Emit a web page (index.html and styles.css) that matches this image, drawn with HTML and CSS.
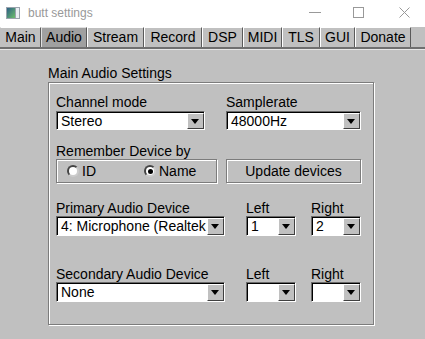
FILE: index.html
```html
<!DOCTYPE html>
<html lang="en">

<head>
  <meta charset="UTF-8">
  <meta name="viewport" content="width=device-width, initial-scale=1.0">
  <title>butt settings</title>
  <link rel="stylesheet" href="styles.css">
</head>

<body>
  <div class="window">
    <div class="titlebar">
      <svg class="app-icon" width="14" height="12" viewBox="0 0 14 12">
        <defs>
          <linearGradient id="ig" x1="0" y1="0" x2="1" y2="1">
            <stop offset="0" stop-color="#2d5f86" />
            <stop offset="1" stop-color="#6cbf6a" />
          </linearGradient>
        </defs>
        <rect x="0" y="0" width="14" height="12" fill="#9aa3ad" />
        <rect x="1" y="1" width="8" height="10" fill="url(#ig)" />
        <rect x="10" y="1" width="3" height="10" fill="#e8eef2" />
      </svg>
      <span class="title">butt settings</span>
      <div class="controls">
        <svg class="ctl ctl-min" width="12" height="12" viewBox="0 0 12 12">
          <line x1="0" y1="6.5" x2="12" y2="6.5" stroke="#999" stroke-width="1" />
        </svg>
        <svg class="ctl ctl-max" width="11" height="11" viewBox="0 0 11 11">
          <rect x="0.5" y="0.5" width="10" height="10" fill="none" stroke="#999" stroke-width="1" />
        </svg>
        <svg class="ctl ctl-close" width="11" height="11" viewBox="0 0 11 11">
          <path d="M0.5 0.5 L10.5 10.5 M10.5 0.5 L0.5 10.5" stroke="#999" stroke-width="1" />
        </svg>
      </div>
    </div>

    <div class="tabs">
      <div class="tab tab-main">Main</div>
      <div class="tab tab-audio active">Audio</div>
      <div class="tab tab-stream">Stream</div>
      <div class="tab tab-record">Record</div>
      <div class="tab tab-dsp">DSP</div>
      <div class="tab tab-midi">MIDI</div>
      <div class="tab tab-tls">TLS</div>
      <div class="tab tab-gui">GUI</div>
      <div class="tab tab-donate">Donate</div>
    </div>

    <div class="panel">
      <div class="group-label">Main Audio Settings</div>
      <div class="group">

        <div class="row row-1">
          <div class="field">
            <div class="label">Channel mode</div>
            <div class="combo combo-channel"><span class="value">Stereo</span><span class="arrow"></span></div>
          </div>
          <div class="field field-rate">
            <div class="label">Samplerate</div>
            <div class="combo combo-rate"><span class="value">48000Hz</span><span class="arrow"></span></div>
          </div>
        </div>

        <div class="row row-2">
          <div class="field">
            <div class="label">Remember Device by</div>
            <div class="radio-box">
              <span class="radio"></span><span class="radio-text">ID</span>
              <span class="radio radio-name checked"></span><span class="radio-text">Name</span>
            </div>
          </div>
          <div class="btn">Update devices</div>
        </div>

        <div class="row row-3">
          <div class="field">
            <div class="label">Primary Audio Device</div>
            <div class="combo combo-device"><span class="value">4: Microphone (Realtek High Definition Audio)</span><span class="arrow"></span></div>
          </div>
          <div class="field field-left">
            <div class="label">Left</div>
            <div class="combo combo-ch"><span class="value">1</span><span class="arrow"></span></div>
          </div>
          <div class="field field-right">
            <div class="label">Right</div>
            <div class="combo combo-ch"><span class="value">2</span><span class="arrow"></span></div>
          </div>
        </div>

        <div class="row row-4">
          <div class="field">
            <div class="label">Secondary Audio Device</div>
            <div class="combo combo-device"><span class="value">None</span><span class="arrow"></span></div>
          </div>
          <div class="field field-left">
            <div class="label">Left</div>
            <div class="combo combo-ch"><span class="value"></span><span class="arrow"></span></div>
          </div>
          <div class="field field-right">
            <div class="label">Right</div>
            <div class="combo combo-ch"><span class="value"></span><span class="arrow"></span></div>
          </div>
        </div>

      </div>
    </div>
  </div>
</body>

</html>
```

FILE: styles.css
```css
body {
  margin: 0;
  font-family: "Liberation Sans", Arial, sans-serif;
  font-size: 14px;
  color: #000;
  background: #c0c0c0;
}

.window {
  width: 425px;
  height: 339px;
  overflow: hidden;
  background: #c0c0c0;
}

/* title bar */
.titlebar {
  height: 27px;
  background: #fff;
  display: flex;
  align-items: center;
}

.app-icon {
  margin-left: 6px;
  margin-top: -2px;
}

.title {
  margin-left: 8px;
  margin-top: -2px;
  font-size: 12px;
  color: #999;
}

.controls {
  margin-left: auto;
  display: flex;
  align-items: center;
  margin-top: -3px;
}

.ctl-min {
  margin-right: 32px;
}

.ctl-max {
  margin-right: 35px;
}

.ctl-close {
  margin-right: 15px;
}

/* tabs */
.tabs {
  display: flex;
  height: 20px;
  border-bottom: 2px solid #6f6f6f;
  box-shadow: 0 1px 0 #e6e6e6;
}

.tab {
  box-sizing: border-box;
  height: 20px;
  line-height: 19px;
  text-align: center;
  border-left: 1px solid #fff;
  border-top: 1px solid #fff;
  border-right: 1px solid #5a5a5a;
  background: #c0c0c0;
  white-space: nowrap;
}

.tab.active {
  background: #a0a0a0;
  border-left-color: #e0e0e0;
  border-top-color: #e0e0e0;
}

.tab-main { width: 41px; border-left-color: #c0c0c0; }
.tab-audio { width: 46px; }
.tab-stream { width: 57px; }
.tab-record { width: 58px; }
.tab-dsp { width: 41px; }
.tab-midi { width: 39px; }
.tab-tls { width: 38px; }
.tab-gui { width: 35px; }
.tab-donate { width: 56px; }

/* panel */
.panel {
  padding: 16px 0 0 48px;
}

.group-label {
  line-height: 16px;
  margin-bottom: 1px;
}

.group {
  box-sizing: border-box;
  width: 326px;
  height: 243px;
  border: 1px solid #7c7c7c;
  box-shadow: inset 1px 1px 0 #fff, 1px 1px 0 #fff;
  padding: 11px 0 0 7px;
}

.row {
  display: flex;
  align-items: flex-end;
}

.row-2 { margin-top: 13px; }
.row-3 { margin-top: 17px; }
.row-4 { margin-top: 30px; }

.label {
  line-height: 16px;
  white-space: nowrap;
}

.row-1 .label {
  line-height: 17px;
}

.field-rate {
  margin-left: 21px;
}

.field-left {
  margin-left: 21px;
}

.field-right {
  margin-left: 15px;
}

/* combo box */
.combo {
  box-sizing: border-box;
  display: flex;
  height: 20px;
  background: #fff;
  border: 1px solid;
  border-color: #6a6a6a #fff #fff #6a6a6a;
  box-shadow: inset 1px 1px 0 #000;
}

.row-1 .combo {
  height: 19px;
}

.combo-channel { width: 149px; }
.combo-rate { width: 135px; }
.combo-device { width: 169px; }
.combo-ch { width: 50px; }

.combo .value {
  flex: 1;
  overflow: hidden;
  white-space: nowrap;
  padding-left: 4px;
  padding-top: 1px;
  line-height: 16px;
}

.arrow {
  position: relative;
  box-sizing: border-box;
  width: 17px;
  margin: 1px 0 0;
  background: #c0c0c0;
  border-left: 1px solid #fff;
  border-top: 1px solid #fff;
  border-right: 1px solid #404040;
  border-bottom: 1px solid #404040;
}

.arrow::after {
  content: '';
  position: absolute;
  left: 3px;
  top: 5px;
  border-left: 4px solid transparent;
  border-right: 4px solid transparent;
  border-top: 5px solid #000;
}

/* radio group and button */
.radio-box {
  box-sizing: border-box;
  width: 161px;
  height: 24px;
  display: flex;
  align-items: center;
  border: 1px solid #7c7c7c;
  box-shadow: inset 1px 1px 0 #fff, 1px 1px 0 #fff;
  padding-left: 10px;
}

.radio {
  box-sizing: border-box;
  width: 12px;
  height: 12px;
  border-radius: 50%;
  background: #fff;
  border: 2px solid;
  border-color: #444 #ccc #ccc #444;
  position: relative;
}

.radio.checked::after {
  content: '';
  position: absolute;
  left: 1.5px;
  top: 1.5px;
  width: 5px;
  height: 5px;
  border-radius: 50%;
  background: #000;
}

.radio-text {
  margin-left: 3px;
}

.radio-name {
  margin-left: 48px;
}

.btn {
  box-sizing: border-box;
  margin-left: 9px;
  width: 135px;
  height: 24px;
  line-height: 22px;
  text-align: center;
  border: 1px solid #7c7c7c;
  box-shadow: inset 1px 1px 0 #fff, 1px 1px 0 #fff;
}
```
